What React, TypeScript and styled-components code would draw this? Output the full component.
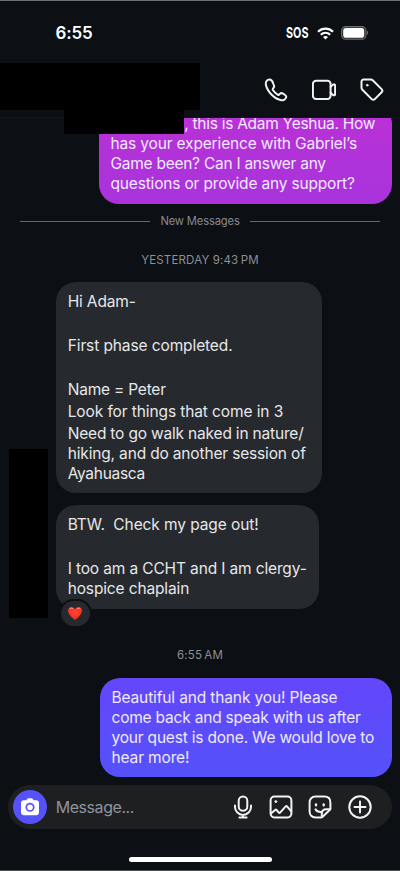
import React from 'react';
import styled, { createGlobalStyle } from 'styled-components';

const GlobalStyle = createGlobalStyle`
  * { box-sizing: border-box; }
  body { margin: 0; background: #0c0f14; }
`;

const Screen = styled.main`
  position: relative;
  display: flex;
  flex-direction: column;
  width: 400px;
  height: 871px;
  overflow: hidden;
  background: #0c0f14;
  border-top: 1px solid #6a6f72;
  border-bottom: 1px solid #4c5053;
  font-family: 'Inter', sans-serif;
  color: #eff0f2;
`;

const StatusBar = styled.div`
  display: flex;
  align-items: center;
  justify-content: space-between;
  height: 62px;
  padding: 2px 31px 0 55.5px;
  flex: none;
`;

const Clock = styled.span`
  font-size: 17px;
  font-weight: 600;
  line-height: 20px;
  letter-spacing: -0.2px;
  color: #fff;
`;

const StatusIcons = styled.div`
  display: flex;
  align-items: center;
  gap: 7px;
`;

const Sos = styled.span`
  width: 22px;
  margin-right: 2px;
  font-size: 15px;
  font-weight: 700;
  line-height: 20px;
  color: #fff;
  transform: scaleX(0.72);
  transform-origin: left center;
`;

const Header = styled.header`
  display: flex;
  align-items: center;
  justify-content: space-between;
  height: 54.5px;
  padding-right: 16px;
  border-bottom: 1px solid #11151a;
  flex: none;
`;

const HiddenName = styled.div`
  align-self: flex-start;
  width: 200px;
  height: 46.5px;
  background: #000;
`;

const HeaderActions = styled.div`
  display: flex;
  gap: 24px;
`;

const Redaction = styled.div<{ $x: number; $y: number; $w: number; $h: number }>`
  position: absolute;
  left: ${(p) => p.$x}px;
  top: ${(p) => p.$y}px;
  width: ${(p) => p.$w}px;
  height: ${(p) => p.$h}px;
  background: #000;
`;

const Thread = styled.section`
  display: flex;
  flex-direction: column;
  align-items: flex-start;
  height: 667.5px;
  overflow: hidden;
  flex: none;
`;

const tones = {
  magenta: 'linear-gradient(#bb31d5, #a833dc)',
  gray: '#26292e',
  indigo: 'linear-gradient(#6446fb, #5452fa)',
};

const Bubble = styled.div<{ $tone: keyof typeof tones; $width: number; $height: number }>`
  position: relative;
  width: ${(p) => p.$width}px;
  height: ${(p) => p.$height}px;
  padding: 9.5px 12px;
  border-radius: 20px;
  background: ${(p) => tones[p.$tone]};
  color: ${(p) => (p.$tone === 'gray' ? '#e6e7e9' : '#f1e9ff')};
  align-self: ${(p) => (p.$tone === 'gray' ? 'flex-start' : 'flex-end')};
  flex: none;
`;

const Outgoing = styled(Bubble)`
  margin-right: 8px;
`;

const ClippedOutgoing = styled(Outgoing)`
  margin-top: -14px;
  padding-top: 10.5px;
`;

const Incoming = styled(Bubble)`
  margin-left: 55.7px;
  & + & { margin-top: 12px; }
`;

const Paragraph = styled.p`
  margin: 0 0 2px;
  min-height: 20px;
`;

const Line = styled.span<{ $spacing: number; $right?: boolean }>`
  display: block;
  font-size: 15.5px;
  line-height: 20px;
  letter-spacing: ${(p) => p.$spacing}px;
  white-space: pre;
  text-align: ${(p) => (p.$right ? 'right' : 'left')};
  padding-right: ${(p) => (p.$right ? 4.8 : 0)}px;
`;

const NewDivider = styled.div`
  display: flex;
  align-items: center;
  gap: 10px;
  width: 360px;
  height: 35px;
  margin-left: 20px;
  flex: none;
  font-size: 11.2px;
  letter-spacing: -0.15px;
  color: #858a90;

  &::before, &::after {
    content: '';
    flex: 1;
    height: 1px;
    background: #626970;
  }
`;

const Timestamp = styled.time<{ $height: number }>`
  display: flex;
  align-items: center;
  justify-content: center;
  width: 100%;
  height: ${(p) => p.$height}px;
  font-size: 11.5px;
  letter-spacing: 0.16px;
  color: #8b9096;
  flex: none;
`;

const TimeShift = styled.span`
  margin-top: 23px;
`;

const Reaction = styled.div`
  position: absolute;
  left: 3px;
  bottom: -19.5px;
  display: grid;
  place-items: center;
  width: 33px;
  height: 29px;
  border: 2px solid #0c0f14;
  border-radius: 15px;
  background: #26292e;
`;

const Composer = styled.div`
  display: flex;
  align-items: center;
  width: 384px;
  height: 44px;
  margin-left: 8px;
  padding: 0 20px 0 5px;
  border-radius: 22px;
  background: #1e1f21;
  flex: none;
`;

const CameraButton = styled.div`
  display: grid;
  place-items: center;
  width: 34px;
  height: 34px;
  border-radius: 50%;
  background: #5652fa;
`;

const Placeholder = styled.span`
  flex: 1;
  padding-left: 8.7px;
  font-size: 16px;
  letter-spacing: -0.44px;
  color: #8e949d;
`;

const ComposerActions = styled.div`
  display: flex;
  align-items: center;
  gap: 15.7px;

  & > :first-child { margin-right: -2px; }
`;

const HomeIndicator = styled.div`
  width: 143px;
  height: 5px;
  margin: 28px auto 0;
  border-radius: 3px;
  background: #fff;
  flex: none;
`;

const Stroke = styled.svg`
  display: block;
  width: 24px;
  height: 24px;
  fill: none;
  stroke: #f2f3f4;
  stroke-width: 2;
  stroke-linecap: round;
  stroke-linejoin: round;
`;

type TextLine = [string, number];

function Message({ paragraphs }: { paragraphs: TextLine[][] }) {
  return (
    <>
      {paragraphs.map((lines, i) => (
        <Paragraph key={i}>
          {lines.map(([text, spacing]) => (
            <Line key={text} $spacing={spacing} $right={text.startsWith(',')}>{text}</Line>
          ))}
        </Paragraph>
      ))}
    </>
  );
}

const greeting: TextLine[][] = [[
  [', this is Adam Yeshua. How', -0.277],
  ['has your experience with Gabriel’s', -0.157],
  ['Game been? Can I answer any', -0.26],
  ['questions or provide any support?', -0.174],
]];

const update: TextLine[][] = [
  [['Hi Adam-', -0.157]],
  [],
  [['First phase completed.', -0.107]],
  [],
  [['Name = Peter', -0.207]],
  [['Look for things that come in 3', -0.102]],
  [
    ['Need to go walk naked in nature/', -0.185],
    ['hiking, and do another session of', -0.159],
    ['Ayahuasca', -0.3],
  ],
];

const aside: TextLine[][] = [
  [['BTW.  Check my page out!', -0.095]],
  [],
  [
    ['I too am a CCHT and I am clergy-', -0.139],
    ['hospice chaplain', -0.14],
  ],
];

const reply: TextLine[][] = [[
  ['Beautiful and thank you! Please', -0.137],
  ['come back and speak with us after', -0.201],
  ['your quest is done. We would love to', -0.194],
  ['hear more!', -0.138],
]];

export default function App() {
  return (
    <>
      <GlobalStyle />
      <Screen>
        <StatusBar>
          <Clock>6:55</Clock>
          <StatusIcons>
            <Sos>SOS</Sos>
            <svg width="17" height="13" viewBox="0 0 17 13" fill="none" stroke="#fff" strokeWidth="2.2">
              <path d="M1 4.7C5.2.6 11.8.6 16 4.7" />
              <path d="M3.8 7.7c2.7-2.5 6.7-2.5 9.4 0" />
              <path d="M8.500 12.500 6 10c1.400-1.300 3.600-1.300 5 0z" fill="#fff" stroke="none" />
            </svg>
            <svg width="28" height="14" viewBox="0 0 28 14">
              <rect x="0.6" y="0.6" width="24.400" height="12.600" rx="4" fill="#2c2f33" stroke="#6b6e72" strokeWidth="1.100" />
              <rect x="2.200" y="2.100" width="21" height="9.600" rx="2.800" fill="#fff" />
              <path d="M26 4.800c1.600.6 1.600 3.400 0 4z" fill="#6b6e72" />
            </svg>
          </StatusIcons>
        </StatusBar>

        <Header>
          <HiddenName />
          <HeaderActions>
            <Stroke viewBox="0 0 24 24">
              <path d="M5.2 1.5c-1 0-1.8.5-2.5 1.3C1.9 3.7 1.5 5 1.8 6.5c.8 3.700 3 7.400 5.900 10.300 2.900 2.900 6.200 4.900 9.800 5.500 1.500.2 2.700-.3 3.500-1.200.8-.8 1.400-1.700 1.300-2.500-.2-1-1.100-1.700-2.100-2.300l-1.600-.9c-1-.5-1.900-.3-2.600.4l-.9.8c-.5.4-1 .4-1.500.1-1.800-1.200-3.500-2.900-4.700-4.700-.3-.5-.3-1 .1-1.500l.7-.8c.6-.8.7-1.600.2-2.600l-.8-1.800C8.400 2.600 6.800 1.400 5.200 1.500z" />
            </Stroke>
            <Stroke viewBox="0 0 24 24">
              <rect x="0.9" y="2.700" width="17.700" height="18.300" rx="3.200" />
              <path d="M18.600 8.700 21 6.700c1-.8 2.100-.4 2.100.8v8.600c0 1.200-1.100 1.600-2.100.8l-2.400-2.100" />
            </Stroke>
            <Stroke viewBox="0 0 24 24">
              <path d="M3.600 1.500h7.100c.8 0 1.500.3 2 .8l8.900 8.800c.9.9.9 2.200 0 3.100l-6.800 6.900c-.9.9-2.200.9-3.100 0L2.400 11.800c-.6-.6-.9-1.300-.9-2.100V3.600c0-1.200.9-2.100 2.100-2.100z" />
              <circle cx="7.200" cy="7.200" r="0.900" fill="#f2f3f4" strokeWidth="0.8" />
            </Stroke>
          </HeaderActions>
        </Header>

        <Thread>
          <ClippedOutgoing $tone="magenta" $width={293.5} $height={100}>
            <Message paragraphs={greeting} />
          </ClippedOutgoing>
          <NewDivider>New Messages</NewDivider>
          <Timestamp $height={43.5}>{'YESTERDAY 9:43\u202fPM'}</Timestamp>
          <Incoming $tone="gray" $width={266.6} $height={211}>
            <Message paragraphs={update} />
          </Incoming>
          <Incoming $tone="gray" $width={263.8} $height={103.5}>
            <Message paragraphs={aside} />
            <Reaction>
              <svg width="16" height="15" viewBox="0 0 16 15">
                <defs>
                  <radialGradient id="heart" cx="50%" cy="40%" r="60%">
                    <stop offset="0" stopColor="#ff4935" />
                    <stop offset="1" stopColor="#ed2920" />
                  </radialGradient>
                </defs>
                <path d="M8 14.200C4.900 11.500 1 8.200 1 4.800 1 2.500 2.500 1 4.500 1 6.100 1 7.400 1.900 8 3.400 8.600 1.900 9.900 1 11.500 1c2 0 3.500 1.500 3.500 3.800C15 8.200 11.100 11.500 8 14.200z" fill="url(#heart)" />
                <path d="M2.800 2.700c.8-.7 2-.8 2.800-.2M10.300 2.500c.8-.6 2-.5 2.800.2" fill="none" stroke="#ffa294" strokeWidth="0.9" strokeLinecap="round" />
              </svg>
            </Reaction>
          </Incoming>
          <Timestamp $height={69.5}>
            <TimeShift>{'6:55\u202fAM'}</TimeShift>
          </Timestamp>
          <Outgoing $tone="indigo" $width={292.5} $height={99}>
            <Message paragraphs={reply} />
          </Outgoing>
        </Thread>

        <Composer>
          <CameraButton>
            <svg width="20" height="20" viewBox="0 0 20 20">
              <path d="M6.3 3.2 7 2.200C7.400 1.500 8 1.200 8.800 1.200h2.400c.8 0 1.400.3 1.800 1l.7 1h2.600c1.600 0 2.700 1.100 2.700 2.700v9.300c0 1.900-1.100 3-3 3H4c-1.900 0-3-1.100-3-3V5.900c0-1.600 1.100-2.700 2.700-2.700z" fill="#fff" />
              <circle cx="10" cy="10.300" r="3.700" fill="none" stroke="#5652fa" strokeWidth="1.700" />
            </svg>
          </CameraButton>
          <Placeholder>Message...</Placeholder>
          <ComposerActions>
            <Stroke viewBox="0 0 24 24">
              <rect x="7.700" y="1.500" width="8.600" height="14.300" rx="4.300" />
              <path d="M4 10.500v1.400a8 8 0 0 0 16 0v-1.400M12 20v2.500M8.400 22.500h7.200" />
            </Stroke>
            <Stroke viewBox="0 0 24 24">
              <rect x="1.600" y="1.600" width="20.800" height="20.800" rx="3.800" />
              <path d="m1.900 18.600 4.300-3.700c.5-.4 1-.4 1.400.1l2.200 2.600c.4.5.9.5 1.300 0l5.600-6.300c.4-.5.9-.5 1.300 0l4.100 4.900" />
              <circle cx="6.800" cy="6.600" r="1" fill="#f2f3f4" strokeWidth="0.9" />
            </Stroke>
            <Stroke viewBox="0 0 24 24">
              <path d="M13.100 22.400H7.600c-3.800 0-6-2.200-6-6V7.600c0-3.800 2.200-6 6-6h8.800c3.800 0 6 2.200 6 6v5.900c-.2.700-.5 1.200-1 1.700l-6.500 6.300c-.5.500-1.100.8-1.800.9z" />
              <path d="M13.800 22.100v-3.300c0-2.800 1.700-4.500 4.500-4.500h4M7.500 14.300c.9 1.900 3.200 2.900 5.900 2.700" />
              <path d="M8 9.500v.8M15.700 9.500v.8" strokeWidth="2.400" />
            </Stroke>
            <Stroke viewBox="0 0 24 24">
              <circle cx="12" cy="12" r="10.700" />
              <path d="M12 6.500v11M6.500 12h11" />
            </Stroke>
          </ComposerActions>
        </Composer>
        <HomeIndicator />

        <Redaction $x={64} $y={109} $w={120} $h={23.7} />
        <Redaction $x={9.3} $y={447.7} $w={38.4} $h={169.7} />
      </Screen>
    </>
  );
}
